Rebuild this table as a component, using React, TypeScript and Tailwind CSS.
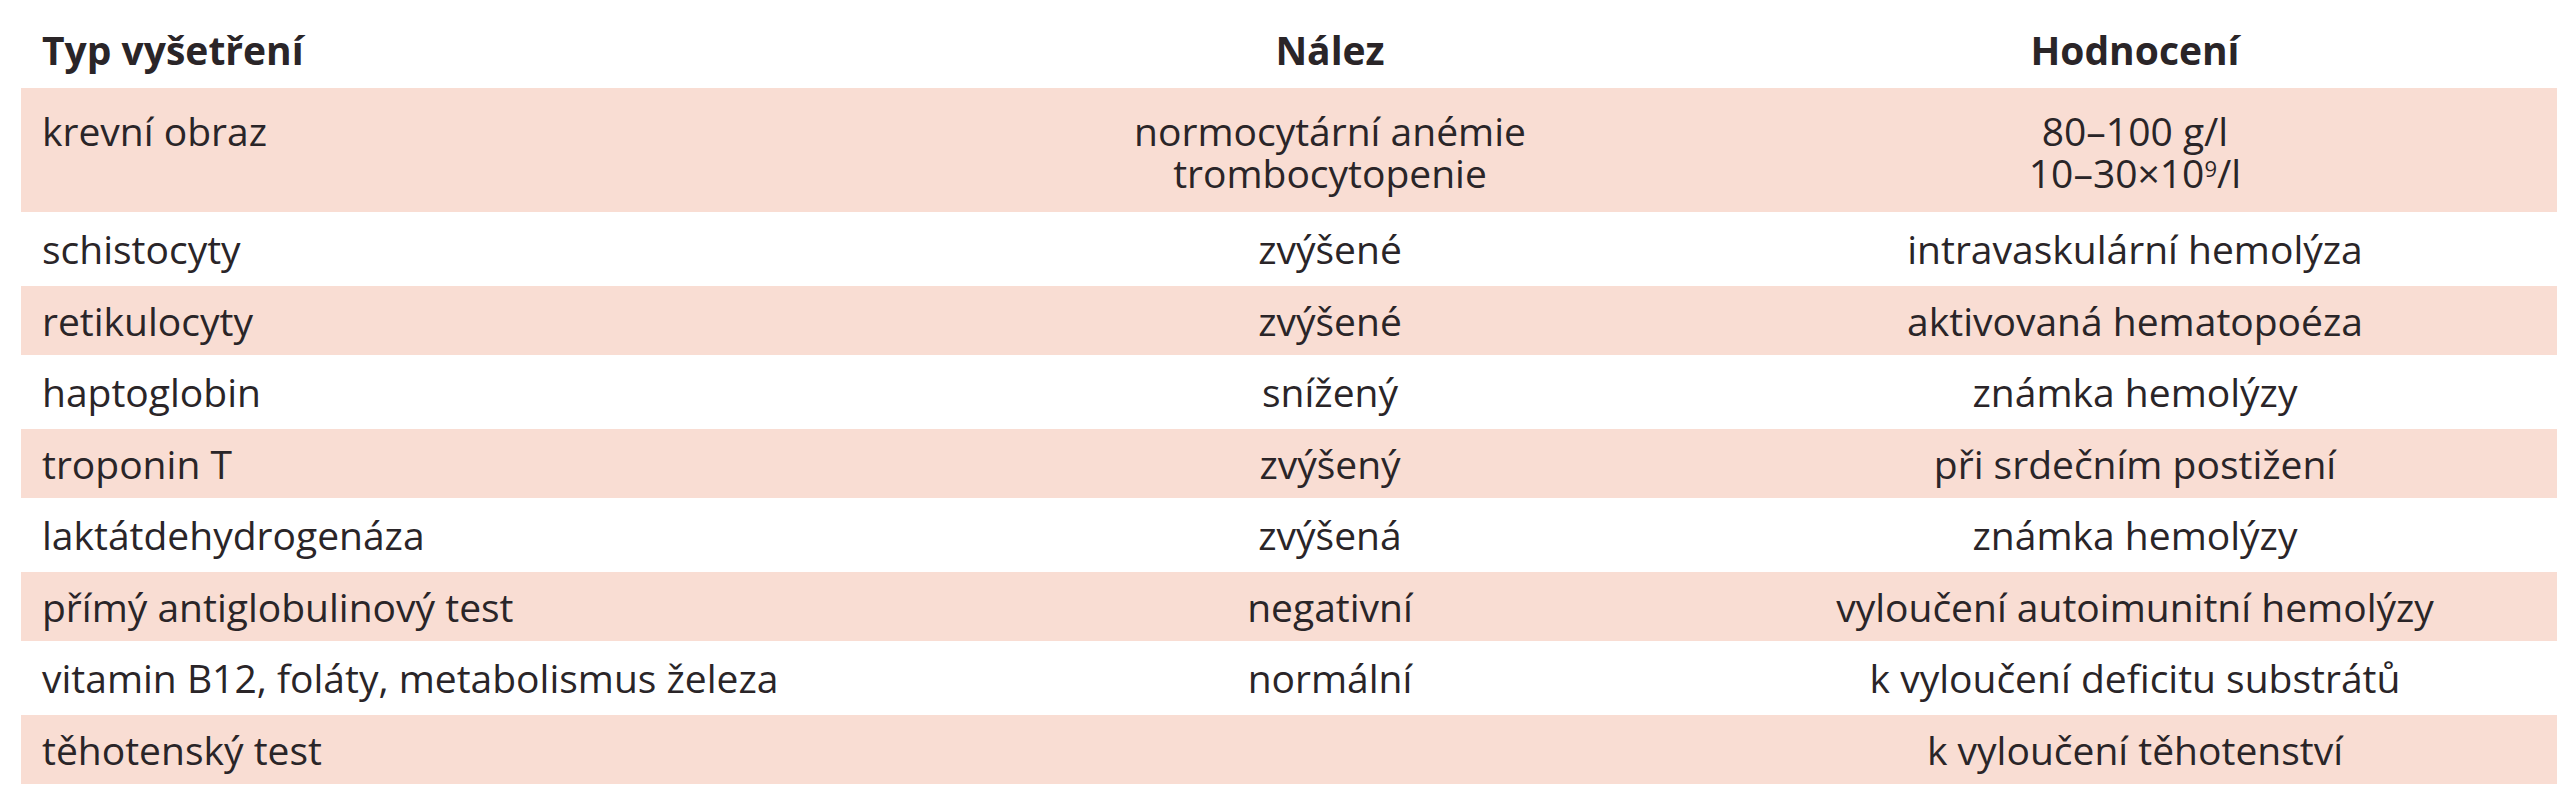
import React from 'react'

interface Row {
    typ: string
    nalez: React.ReactNode
    hodnoceni: React.ReactNode
}

const rows: Row[] = [
    {typ: "schistocyty", nalez: "zvýšené", hodnoceni: "intravaskulární hemolýza"},
    {typ: "retikulocyty", nalez: "zvýšené", hodnoceni: "aktivovaná hematopoéza"},
    {typ: "haptoglobin", nalez: "snížený", hodnoceni: "známka hemolýzy"},
    {typ: "troponin T", nalez: "zvýšený", hodnoceni: "při srdečním postižení"},
    {typ: "laktátdehydrogenáza", nalez: "zvýšená", hodnoceni: "známka hemolýzy"},
    {typ: "přímý antiglobulinový test", nalez: "negativní", hodnoceni: "vyloučení autoimunitní hemolýzy"},
    {typ: "vitamin B12, foláty, metabolismus železa", nalez: "normální", hodnoceni: "k vyloučení deficitu substrátů"},
    {typ: "těhotenský test", nalez: "", hodnoceni: "k vyloučení těhotenství"},
]

export default function App() {
    return (
        <div className="w-[2575px] h-[800px] bg-white pl-[21px] text-[#2a2528] text-[39px] leading-[42px] font-['Open_Sans',sans-serif]">
            <div className="grid grid-cols-[926px_766px_844px] w-[2536px]">
                {/* header */}
                <div className="h-[88px] pt-[29px] pl-[21px] font-bold">Typ vyšetření</div>
                <div className="h-[88px] pt-[29px] text-center font-bold">Nález</div>
                <div className="h-[88px] pt-[29px] text-center font-bold">Hodnocení</div>

                {/* first row, two lines */}
                <div className="h-[124px] pt-[22px] pl-[21px] bg-[#f9ddd3]">krevní obraz</div>
                <div className="h-[124px] pt-[22px] text-center bg-[#f9ddd3]">
                    <div>normocytární anémie</div>
                    <div>trombocytopenie</div>
                </div>
                <div className="h-[124px] pt-[22px] text-center bg-[#f9ddd3]">
                    <div>80–100 g/l</div>
                    <div>10–30×10<sup className="text-[22px]">9</sup>/l</div>
                </div>

                {rows.map((r, idx) => {
                    const pink = idx % 2 === 1
                    const cls = pink ? "h-[69px] bg-[#f9ddd3] flex items-center" : "h-[74px] flex items-center"
                    return (
                        <React.Fragment key={idx}>
                            <div className={cls + " pl-[21px]"}>{r.typ}</div>
                            <div className={cls + " justify-center"}>{r.nalez}</div>
                            <div className={cls + " justify-center"}>{r.hodnoceni}</div>
                        </React.Fragment>
                    )
                })}
            </div>
        </div>
    )
}
